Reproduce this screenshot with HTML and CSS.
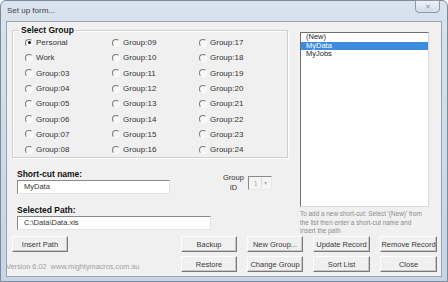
FILE: index.html
```html
<!DOCTYPE html>
<html lang="en">
<head>
  <meta charset="UTF-8">
  <title>Set up form...</title>
  <link rel="stylesheet" href="styles.css">
</head>
<body>

<div class="window">
  <div class="titlebar">
    <span class="title">Set up form...</span>
    <span class="close">&#x2715;</span>
  </div>

  <div class="client">
    <div class="top">
      <div class="left">
        <fieldset class="group-box">
          <legend>Select Group</legend>
          <div class="radios">
            <label class="opt"><span class="radio checked"></span>Personal</label>
            <label class="opt"><span class="radio"></span>Work</label>
            <label class="opt"><span class="radio"></span>Group:03</label>
            <label class="opt"><span class="radio"></span>Group:04</label>
            <label class="opt"><span class="radio"></span>Group:05</label>
            <label class="opt"><span class="radio"></span>Group:06</label>
            <label class="opt"><span class="radio"></span>Group:07</label>
            <label class="opt"><span class="radio"></span>Group:08</label>
            <label class="opt"><span class="radio"></span>Group:09</label>
            <label class="opt"><span class="radio"></span>Group:10</label>
            <label class="opt"><span class="radio"></span>Group:11</label>
            <label class="opt"><span class="radio"></span>Group:12</label>
            <label class="opt"><span class="radio"></span>Group:13</label>
            <label class="opt"><span class="radio"></span>Group:14</label>
            <label class="opt"><span class="radio"></span>Group:15</label>
            <label class="opt"><span class="radio"></span>Group:16</label>
            <label class="opt"><span class="radio"></span>Group:17</label>
            <label class="opt"><span class="radio"></span>Group:18</label>
            <label class="opt"><span class="radio"></span>Group:19</label>
            <label class="opt"><span class="radio"></span>Group:20</label>
            <label class="opt"><span class="radio"></span>Group:21</label>
            <label class="opt"><span class="radio"></span>Group:22</label>
            <label class="opt"><span class="radio"></span>Group:23</label>
            <label class="opt"><span class="radio"></span>Group:24</label>
          </div>
        </fieldset>

        <div class="name-row">
          <div class="field">
            <div class="field-label">Short-cut name:</div>
            <div class="textbox name-box">MyData</div>
          </div>
          <div class="group-id">
            <span class="gid-label">Group<br>ID</span>
            <div class="combo">
              <span class="combo-value">1</span>
              <span class="combo-arrow">&#x25BE;</span>
            </div>
          </div>
        </div>

        <div class="field path-field">
          <div class="field-label">Selected Path:</div>
          <div class="textbox path-box">C:\Data\Data.xls</div>
        </div>
      </div>

      <div class="right">
        <div class="listbox">
          <div class="item">(New)</div>
          <div class="item selected">MyData</div>
          <div class="item">MyJobs</div>
        </div>
        <p class="hint">To add a new short-cut: Select '(New)' from<br>the list then enter a short-cut name and<br>insert the path</p>
      </div>
    </div>

    <div class="buttons">
      <button class="btn insert">Insert Path</button>
      <button class="btn c3">Backup</button>
      <button class="btn">New Group...</button>
      <button class="btn">Update Record</button>
      <button class="btn">Remove Record</button>
      <span class="version">Version 6.02&nbsp; www.mightymacros.com.au</span>
      <button class="btn c3">Restore</button>
      <button class="btn">Change Group</button>
      <button class="btn">Sort List</button>
      <button class="btn">Close</button>
    </div>
  </div>
</div>

</body>
</html>
```

FILE: styles.css
```css
* {
  box-sizing: border-box;
}

body {
  margin: 0;
  padding: 0;
  background-color: #ffffff;
  font-family: 'Liberation Sans', Arial, sans-serif;
  color: #222222;
}

.window {
  width: 448px;
  height: 282px;
  background: linear-gradient(#d9e3ee, #c6d4e3);
  border: 1px solid #7d8a99;
  border-radius: 6px 6px 0 0;
  display: flex;
  flex-direction: column;
}

.titlebar {
  height: 20px;
  display: flex;
  justify-content: space-between;
  align-items: flex-start;
  padding: 0 7px 0 6px;
}

.title {
  font-size: 8px;
  color: #3f3f3f;
  margin-top: 5px;
}

.close {
  width: 25px;
  height: 13px;
  margin-top: -1px;
  border: 1px solid #8c99a9;
  border-radius: 0 0 4px 4px;
  background: linear-gradient(#eef2f7, #d3dce7);
  color: #8f9bab;
  font-size: 7px;
  line-height: 12px;
  text-align: center;
}

.client {
  margin: 0 5px;
  height: 256px;
  background-color: #f0f0f0;
  border: 1px solid #98a4b2;
  display: flex;
  flex-direction: column;
}

.top {
  height: 214px;
  display: flex;
  gap: 12px;
}

.left {
  width: 281px;
  padding-left: 5px;
}

/* group box */

.group-box {
  margin: 3px 0 0 0;
  padding: 0 0 0 12px;
  width: 276px;
  height: 133px;
  border: 1px solid #d0d0cc;
  box-shadow: inset 1px 1px 0 #ffffff, 1px 1px 0 #ffffff;
}

.group-box legend {
  font-size: 8.5px;
  font-weight: bold;
  line-height: 10px;
  padding: 0 2px;
  margin-left: -6px;
  color: #111111;
}

.radios {
  display: grid;
  grid-template-columns: repeat(3, 87px);
  grid-template-rows: repeat(8, 15.3px);
  grid-auto-flow: column;
}

.opt {
  display: flex;
  align-items: center;
  gap: 3px;
  font-size: 8px;
  color: #333333;
}

.radio {
  width: 8px;
  height: 8px;
  border-radius: 50%;
  border: 1px solid;
  border-color: #7c7c7c #fbfbfb #fbfbfb #7c7c7c;
  background-color: #f7f7f7;
  display: flex;
  justify-content: center;
  align-items: center;
}

.radio.checked::after {
  content: '';
  width: 3px;
  height: 3px;
  border-radius: 50%;
  background-color: #111111;
}

/* text fields */

.name-row {
  display: flex;
  align-items: flex-end;
  margin-top: 11px;
}

.field {
  padding-left: 5px;
}

.field-label {
  font-size: 8.5px;
  font-weight: bold;
  line-height: 10px;
  margin-bottom: 1px;
  color: #111111;
}

.textbox {
  height: 14px;
  background-color: #ffffff;
  border: 1px solid;
  border-color: #8a8a8a #e4e4e4 #e4e4e4 #8a8a8a;
  font-size: 7.5px;
  line-height: 12px;
  padding-left: 6px;
  color: #333333;
}

.name-box {
  width: 153px;
}

.path-field {
  margin-top: 11px;
}

.path-box {
  width: 194px;
}

.group-id {
  display: flex;
  align-items: center;
  gap: 4px;
  margin-left: 53px;
  margin-bottom: 1px;
}

.gid-label {
  font-size: 7.5px;
  line-height: 10px;
  text-align: center;
  color: #333333;
}

.combo {
  width: 24px;
  height: 14px;
  border: 1px solid;
  border-color: #8a8a8a #e8e8e8 #e8e8e8 #8a8a8a;
  background-color: #f4f4f4;
  display: flex;
  align-items: center;
  justify-content: space-between;
  padding: 0 1px 0 5px;
  font-size: 7px;
  color: #b0b0b0;
}

.combo-arrow {
  width: 9px;
  height: 10px;
  font-size: 6px;
  line-height: 10px;
  text-align: center;
  border-left: 1px solid #dddddd;
}

/* list */

.right {
  width: 129px;
}

.listbox {
  margin-top: 10px;
  height: 175px;
  background-color: #ffffff;
  border: 1px solid;
  border-color: #6f6f6f #d8d8d8 #d8d8d8 #6f6f6f;
}

.item {
  height: 8.5px;
  font-size: 7.5px;
  line-height: 8.5px;
  padding-left: 5px;
  color: #222222;
}

.item.selected {
  background-color: #3d8ce0;
  color: #ffffff;
}

.hint {
  margin: 3px 0 0 0;
  font-size: 6.4px;
  line-height: 8.7px;
  color: #8c8c8c;
  white-space: nowrap;
}

/* buttons */

.buttons {
  display: grid;
  grid-template-columns: 56px 1fr 56px 56px 57px 57px;
  grid-template-rows: 16px 16px;
  column-gap: 10px;
  row-gap: 4px;
  padding: 0 4px 0 5px;
}

.btn {
  margin: 0;
  padding: 0;
  font-family: 'Liberation Sans', Arial, sans-serif;
  font-size: 7.5px;
  color: #3a3a3a;
  background-color: #f0f0f0;
  border: 1px solid;
  border-color: #fdfdfd #7a7a7a #7a7a7a #fdfdfd;
  box-shadow: inset -1px -1px 0 #c8c8c8;
}

.c3 {
  grid-column: 3;
}

.version {
  grid-column: 1 / 3;
  align-self: end;
  margin-left: -6px;
  font-size: 7.3px;
  line-height: 10px;
  color: #a0a0a0;
  white-space: nowrap;
}
```
